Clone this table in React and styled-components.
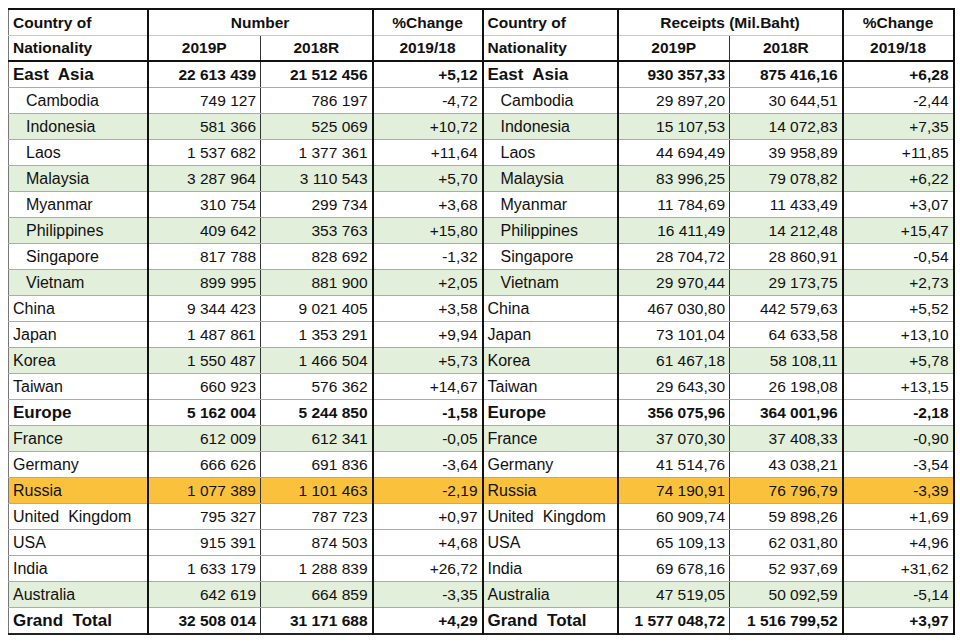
import React from 'react';
import styled, { createGlobalStyle } from 'styled-components';

const GlobalStyle = createGlobalStyle`
  html, body {
    margin: 0;
    padding: 0;
    background: #ffffff;
  }
  body {
    font-family: "Liberation Sans", Arial, sans-serif;
    color: #111;
  }
`;

const Page = styled.div`
  padding: 8px 0 0 8px;
  width: 960px;
  height: 642px;
  box-sizing: border-box;
`;

const Table = styled.table`
  border-collapse: collapse;
  table-layout: fixed;
  width: 945px;
  border-top: 2px solid #111;
  border-left: 1px solid #777;
  border-bottom: 2px solid #222;
`;

const GREEN = '#e2efda';
const ORANGE = '#fac23c';

// right border per column: major lines black 2px, the year split thinner
const colBorder = [
  '2px solid #111',
  '1px solid #333',
  '2px solid #111',
  '2px solid #111',
  '2px solid #111',
  '1px solid #333',
  '2px solid #111',
  '2px solid #111',
];

const HeadCell = styled.th`
  height: ${p => (p.$last ? '24px' : '25px')};
  padding: 0 4px;
  font-size: 15.5px;
  font-weight: 700;
  text-align: ${p => (p.$left ? 'left' : 'center')};
  border-right: ${p => colBorder[p.$col]};
  border-bottom: ${p => (p.$last ? '2px solid #111' : '1px solid #c8c8c8')};
  white-space: nowrap;
  overflow: hidden;
`;

const NameCell = styled.td`
  height: 25px;
  padding: 0 0 0 ${p => (p.$indent ? '17px' : '4px')};
  font-size: ${p => (p.$bold ? '17px' : '16px')};
  font-weight: ${p => (p.$bold ? 700 : 400)};
  white-space: pre;
  overflow: hidden;
  background: ${p => p.$bg || 'transparent'};
  border-right: ${p => colBorder[p.$col]};
  border-bottom: 1px solid #ababab;
`;

const NumCell = styled.td`
  height: 25px;
  padding: 0 4px 0 0;
  font-size: 15.5px;
  font-weight: ${p => (p.$bold ? 700 : 400)};
  text-align: right;
  white-space: nowrap;
  overflow: hidden;
  background: ${p => p.$bg || 'transparent'};
  border-right: ${p => colBorder[p.$col]};
  border-bottom: 1px solid #ababab;
`;

const widths = [139, 113, 112, 110, 135, 112, 113, 111];

// kind: g = group total, s = sub-country (indented), c = country
const rows = [
  ['g', 'East  Asia', '22 613 439', '21 512 456', '+5,12', '930 357,33', '875 416,16', '+6,28'],
  ['s', 'Cambodia', '749 127', '786 197', '-4,72', '29 897,20', '30 644,51', '-2,44'],
  ['s', 'Indonesia', '581 366', '525 069', '+10,72', '15 107,53', '14 072,83', '+7,35', GREEN],
  ['s', 'Laos', '1 537 682', '1 377 361', '+11,64', '44 694,49', '39 958,89', '+11,85'],
  ['s', 'Malaysia', '3 287 964', '3 110 543', '+5,70', '83 996,25', '79 078,82', '+6,22', GREEN],
  ['s', 'Myanmar', '310 754', '299 734', '+3,68', '11 784,69', '11 433,49', '+3,07'],
  ['s', 'Philippines', '409 642', '353 763', '+15,80', '16 411,49', '14 212,48', '+15,47', GREEN],
  ['s', 'Singapore', '817 788', '828 692', '-1,32', '28 704,72', '28 860,91', '-0,54'],
  ['s', 'Vietnam', '899 995', '881 900', '+2,05', '29 970,44', '29 173,75', '+2,73', GREEN],
  ['c', 'China', '9 344 423', '9 021 405', '+3,58', '467 030,80', '442 579,63', '+5,52'],
  ['c', 'Japan', '1 487 861', '1 353 291', '+9,94', '73 101,04', '64 633,58', '+13,10'],
  ['c', 'Korea', '1 550 487', '1 466 504', '+5,73', '61 467,18', '58 108,11', '+5,78', GREEN],
  ['c', 'Taiwan', '660 923', '576 362', '+14,67', '29 643,30', '26 198,08', '+13,15'],
  ['g', 'Europe', '5 162 004', '5 244 850', '-1,58', '356 075,96', '364 001,96', '-2,18'],
  ['c', 'France', '612 009', '612 341', '-0,05', '37 070,30', '37 408,33', '-0,90', GREEN],
  ['c', 'Germany', '666 626', '691 836', '-3,64', '41 514,76', '43 038,21', '-3,54'],
  ['c', 'Russia', '1 077 389', '1 101 463', '-2,19', '74 190,91', '76 796,79', '-3,39', ORANGE],
  ['c', 'United  Kingdom', '795 327', '787 723', '+0,97', '60 909,74', '59 898,26', '+1,69'],
  ['c', 'USA', '915 391', '874 503', '+4,68', '65 109,13', '62 031,80', '+4,96'],
  ['c', 'India', '1 633 179', '1 288 839', '+26,72', '69 678,16', '52 937,69', '+31,62'],
  ['c', 'Australia', '642 619', '664 859', '-3,35', '47 519,05', '50 092,59', '-5,14', GREEN],
  ['g', 'Grand  Total', '32 508 014', '31 171 688', '+4,29', '1 577 048,72', '1 516 799,52', '+3,97'],
];

const Half = ({ offset, name, nums, kind, bg }) => {
  const bold = kind === 'g';
  return (
    <>
      <NameCell $col={offset} $bold={bold} $indent={kind === 's'} $bg={bg}>
        {name}
      </NameCell>
      {nums.map((n, i) => (
        <NumCell key={i} $col={offset + 1 + i} $bold={bold} $bg={bg}>
          {n}
        </NumCell>
      ))}
    </>
  );
};

const App = () => (
  <Page>
    <GlobalStyle />
    <Table>
      <colgroup>
        {widths.map((w, i) => (
          <col key={i} style={{ width: w }} />
        ))}
      </colgroup>
      <thead>
        <tr>
          <HeadCell $col={0} $left>Country of</HeadCell>
          <HeadCell $col={2} colSpan={2}>Number</HeadCell>
          <HeadCell $col={3}>%Change</HeadCell>
          <HeadCell $col={4} $left>Country of</HeadCell>
          <HeadCell $col={6} colSpan={2}>Receipts (Mil.Baht)</HeadCell>
          <HeadCell $col={7}>%Change</HeadCell>
        </tr>
        <tr>
          <HeadCell $col={0} $left $last>Nationality</HeadCell>
          <HeadCell $col={1} $last>2019P</HeadCell>
          <HeadCell $col={2} $last>2018R</HeadCell>
          <HeadCell $col={3} $last>2019/18</HeadCell>
          <HeadCell $col={4} $left $last>Nationality</HeadCell>
          <HeadCell $col={5} $last>2019P</HeadCell>
          <HeadCell $col={6} $last>2018R</HeadCell>
          <HeadCell $col={7} $last>2019/18</HeadCell>
        </tr>
      </thead>
      <tbody>
        {rows.map(([kind, name, a, b, c, d, e, f, bg]) => (
          <tr key={name}>
            <Half offset={0} name={name} nums={[a, b, c]} kind={kind} bg={bg} />
            <Half offset={4} name={name} nums={[d, e, f]} kind={kind} bg={bg} />
          </tr>
        ))}
      </tbody>
    </Table>
  </Page>
);

export default App;
